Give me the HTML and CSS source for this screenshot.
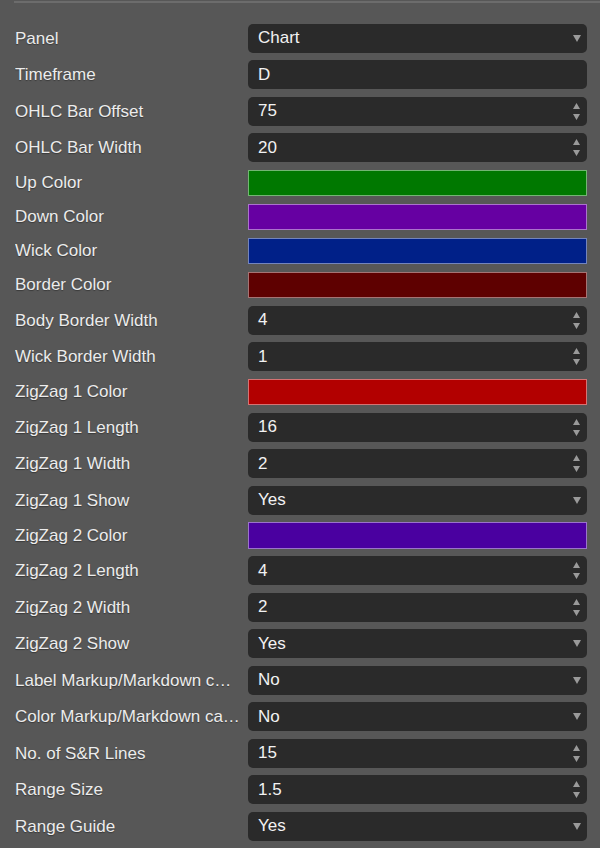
FILE: index.html
```html
<!DOCTYPE html>
<html>
<head>
<meta charset="utf-8">
<link rel="stylesheet" href="styles.css">
</head>
<body>
<div class="panel">
  <div class="row"><div class="label">Panel</div><div class="field"><span class="val">Chart</span><svg class="caret" width="8" height="7" viewBox="0 0 8 7"><path d="M0 0H8L4 7Z"/></svg></div></div>
  <div class="row"><div class="label">Timeframe</div><div class="field"><span class="val">D</span></div></div>
  <div class="row"><div class="label">OHLC Bar Offset</div><div class="field"><span class="val">75</span><svg class="spin" width="7" height="17" viewBox="0 0 7 17"><path d="M3.5 0L7 6H0Z M0 11H7L3.5 17Z"/></svg></div></div>
  <div class="row"><div class="label">OHLC Bar Width</div><div class="field"><span class="val">20</span><svg class="spin" width="7" height="17" viewBox="0 0 7 17"><path d="M3.5 0L7 6H0Z M0 11H7L3.5 17Z"/></svg></div></div>
  <div class="row"><div class="label">Up Color</div><div class="swatch c-up"></div></div>
  <div class="row"><div class="label">Down Color</div><div class="swatch c-down"></div></div>
  <div class="row"><div class="label">Wick Color</div><div class="swatch c-wick"></div></div>
  <div class="row"><div class="label">Border Color</div><div class="swatch c-border"></div></div>
  <div class="row"><div class="label">Body Border Width</div><div class="field"><span class="val">4</span><svg class="spin" width="7" height="17" viewBox="0 0 7 17"><path d="M3.5 0L7 6H0Z M0 11H7L3.5 17Z"/></svg></div></div>
  <div class="row"><div class="label">Wick Border Width</div><div class="field"><span class="val">1</span><svg class="spin" width="7" height="17" viewBox="0 0 7 17"><path d="M3.5 0L7 6H0Z M0 11H7L3.5 17Z"/></svg></div></div>
  <div class="row"><div class="label">ZigZag 1 Color</div><div class="swatch c-zz1"></div></div>
  <div class="row"><div class="label">ZigZag 1 Length</div><div class="field"><span class="val">16</span><svg class="spin" width="7" height="17" viewBox="0 0 7 17"><path d="M3.5 0L7 6H0Z M0 11H7L3.5 17Z"/></svg></div></div>
  <div class="row"><div class="label">ZigZag 1 Width</div><div class="field"><span class="val">2</span><svg class="spin" width="7" height="17" viewBox="0 0 7 17"><path d="M3.5 0L7 6H0Z M0 11H7L3.5 17Z"/></svg></div></div>
  <div class="row"><div class="label">ZigZag 1 Show</div><div class="field"><span class="val">Yes</span><svg class="caret" width="8" height="7" viewBox="0 0 8 7"><path d="M0 0H8L4 7Z"/></svg></div></div>
  <div class="row"><div class="label">ZigZag 2 Color</div><div class="swatch c-zz2"></div></div>
  <div class="row"><div class="label">ZigZag 2 Length</div><div class="field"><span class="val">4</span><svg class="spin" width="7" height="17" viewBox="0 0 7 17"><path d="M3.5 0L7 6H0Z M0 11H7L3.5 17Z"/></svg></div></div>
  <div class="row"><div class="label">ZigZag 2 Width</div><div class="field"><span class="val">2</span><svg class="spin" width="7" height="17" viewBox="0 0 7 17"><path d="M3.5 0L7 6H0Z M0 11H7L3.5 17Z"/></svg></div></div>
  <div class="row"><div class="label">ZigZag 2 Show</div><div class="field"><span class="val">Yes</span><svg class="caret" width="8" height="7" viewBox="0 0 8 7"><path d="M0 0H8L4 7Z"/></svg></div></div>
  <div class="row"><div class="label">Label Markup/Markdown c…</div><div class="field"><span class="val">No</span><svg class="caret" width="8" height="7" viewBox="0 0 8 7"><path d="M0 0H8L4 7Z"/></svg></div></div>
  <div class="row"><div class="label">Color Markup/Markdown ca…</div><div class="field"><span class="val">No</span><svg class="caret" width="8" height="7" viewBox="0 0 8 7"><path d="M0 0H8L4 7Z"/></svg></div></div>
  <div class="row"><div class="label">No. of S&amp;R Lines</div><div class="field"><span class="val">15</span><svg class="spin" width="7" height="17" viewBox="0 0 7 17"><path d="M3.5 0L7 6H0Z M0 11H7L3.5 17Z"/></svg></div></div>
  <div class="row"><div class="label">Range Size</div><div class="field"><span class="val">1.5</span><svg class="spin" width="7" height="17" viewBox="0 0 7 17"><path d="M3.5 0L7 6H0Z M0 11H7L3.5 17Z"/></svg></div></div>
  <div class="row"><div class="label">Range Guide</div><div class="field"><span class="val">Yes</span><svg class="caret" width="8" height="7" viewBox="0 0 8 7"><path d="M0 0H8L4 7Z"/></svg></div></div>
</div>
</body>
</html>
```

FILE: styles.css
```css
html, body {
  margin: 0;
  padding: 0;
  background: #575757;
}
body {
  width: 600px;
  height: 848px;
  overflow: hidden;
  font-family: "Liberation Sans", Arial, sans-serif;
}
.panel {
  border-top: 2px solid #6c6c6c;
  margin: 1px 0 0 14px;
  padding: 20.5px 0 0 1px;
  display: flex;
  flex-direction: column;
  gap: 7.5px;
}
.row {
  display: grid;
  grid-template-columns: 233px 339px;
  align-items: center;
}
.label {
  color: #ececec;
  font-size: 17px;
  line-height: 20px;
  padding-top: 1px;
  white-space: nowrap;
  overflow: hidden;
  text-overflow: ellipsis;
  text-shadow: 0 1px 1px rgba(0,0,0,0.35);
}
.field {
  height: 29px;
  background: #2a2a2a;
  border-radius: 5px;
  display: flex;
  align-items: center;
  justify-content: space-between;
  padding: 0 6px 0 10px;
  box-sizing: border-box;
  color: #f2f2f2;
  font-size: 17px;
}
.caret, .spin {
  fill: #9a9a9a;
  flex: none;
}
.spin {
  margin-right: 1px;
}
.swatch {
  height: 26.5px;
  box-sizing: border-box;
  border: 1.5px solid rgba(255,255,255,0.45);
}
.c-up { background: #007800; }
.c-down { background: #6600a2; }
.c-wick { background: #002088; }
.c-border { background: #5e0000; }
.c-zz1 { background: #b20000; }
.c-zz2 { background: #4a00a0; }
```
